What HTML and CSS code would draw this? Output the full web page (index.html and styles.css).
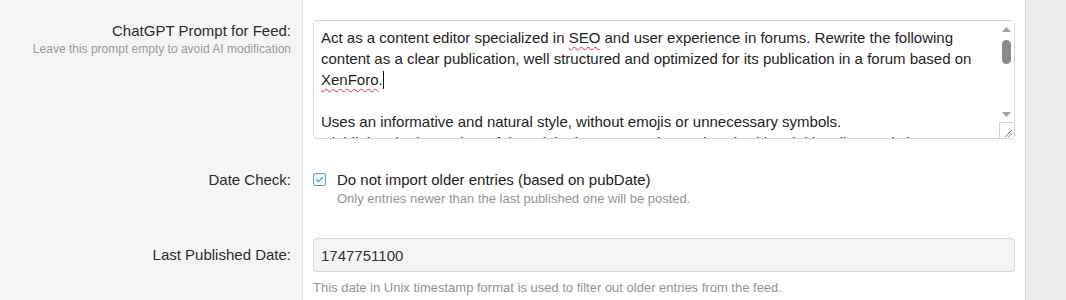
FILE: index.html
```html
<!DOCTYPE html>
<html lang="en">
<head>
<meta charset="utf-8">
<title>Feed options</title>
<link rel="stylesheet" href="styles.css">
</head>
<body>
<div class="page">
  <div class="block">
    <dl class="row row--textarea">
      <dt>
        <div class="label">ChatGPT Prompt for Feed:</div>
        <div class="dt-hint">Leave this prompt empty to avoid AI modification</div>
      </dt>
      <dd>
        <div class="textarea">
          <div class="textarea-text" contenteditable="true" spellcheck="false" role="textbox" aria-multiline="true">Act as a content editor specialized in <span class="misspelt">SEO</span> and user experience in forums. Rewrite the following content as a clear publication, well structured and optimized for its publication in a forum based on <span class="misspelt">XenForo</span>.<span class="caret"></span>

Uses an informative and natural style, without emojis or unnecessary symbols.
Highlights the key points of the original content and organizes it with subtitles, lists and short paragraphs when useful.
Keeps the original meaning, corrects spelling and grammar errors and avoids adding information that is not present in the source.
Finish with a brief conclusion that invites users to participate in the discussion.</div>
          <div class="scrollbar" aria-hidden="true">
            <div class="sb-btn">
              <svg width="9" height="5" viewBox="0 0 9 5"><path d="M0 5L4.5 0L9 5z" fill="#a0a0a0"/></svg>
            </div>
            <div class="sb-track"><div class="sb-thumb"></div></div>
            <div class="sb-btn">
              <svg width="9" height="5" viewBox="0 0 9 5"><path d="M0 0L4.5 5L9 0z" fill="#a0a0a0"/></svg>
            </div>
            <div class="sb-corner">
              <svg width="15" height="16" viewBox="0 0 15 16"><path d="M0.5 16V0.5H15" fill="none" stroke="#d2d2d2"/><path d="M13 8L6 15M13 11.5L9.5 15" stroke="#7a7a7a" stroke-width="1"/></svg>
            </div>
          </div>
        </div>
      </dd>
    </dl>
    <dl class="row row--check">
      <dt>
        <div class="label">Date Check:</div>
      </dt>
      <dd>
        <label class="check">
          <input type="checkbox" class="check-box" checked>
          <span>Do not import older entries (based on pubDate)</span>
        </label>
        <div class="hint hint--indent">Only entries newer than the last published one will be posted.</div>
      </dd>
    </dl>
    <dl class="row row--input">
      <dt>
        <div class="label">Last Published Date:</div>
      </dt>
      <dd>
        <input class="input" type="text" value="1747751100" readonly>
        <div class="hint hint--below">This date in Unix timestamp format is used to filter out older entries from the feed.</div>
      </dd>
    </dl>
  </div>
  <div class="gutter"></div>
</div>
</body>
</html>
```

FILE: styles.css
```css
* {
  box-sizing: border-box;
}

html, body {
  margin: 0;
  padding: 0;
}

body {
  background: #ebebeb;
  font-family: "Liberation Sans", Arial, sans-serif;
  color: #222;
  font-size: 15px;
  line-height: 21px;
}

.page {
  display: flex;
  height: 300px;
  overflow: hidden;
}

.block {
  width: 1026px;
  flex: none;
  background: #fff;
  border-right: 1px solid #d6d6d6;
}

.gutter {
  flex: 1;
  background: #ebebeb;
}

.row {
  display: grid;
  grid-template-columns: 303px 1fr;
  margin: 0;
}

.row dt {
  background: #f5f5f5;
  border-right: 1px solid #e3e3e3;
  text-align: right;
  padding-right: 11px;
}

.row dd {
  margin: 0;
  padding: 15px 10px;
}

.label {
  color: #2b2b2b;
}

.dt-hint {
  font-size: 12px;
  line-height: 17px;
  color: #9a9a9a;
}

/* Row 1 – textarea */
.row--textarea dt {
  padding-top: 20px;
}

.row--textarea dd {
  padding-top: 20px;
}

.textarea {
  display: flex;
  width: 100%;
  height: 119px;
  border: 1px solid #c3d8e9;
  border-radius: 4px;
  background: #fff;
  overflow: hidden;
}

.textarea-text {
  flex: 1;
  min-width: 0;
  padding: 6px 7px 7px;
  color: #1e1e1e;
  white-space: pre-wrap;
  overflow: hidden;
  outline: none;
}

.misspelt {
  text-decoration: underline wavy #d9302c;
  text-decoration-thickness: 1px;
  text-underline-offset: 3px;
}

.caret {
  display: inline-block;
  width: 1px;
  height: 18px;
  background: #111;
  vertical-align: -4px;
}

.scrollbar {
  width: 15px;
  flex: none;
  display: flex;
  flex-direction: column;
  background: #fff;
}

.sb-btn {
  height: 16px;
  display: flex;
  align-items: center;
  justify-content: center;
}

.sb-btn svg {
  display: block;
}

.sb-track {
  flex: 1;
  padding: 3px 3px;
}

.sb-thumb {
  width: 9px;
  height: 24px;
  border-radius: 5px;
  background: #8a8a8a;
}

.sb-corner {
  height: 16px;
}

.sb-corner svg {
  display: block;
}

/* Row 2 – checkbox */
.row--check dt {
  padding-top: 15px;
}

.check {
  display: flex;
  align-items: center;
  gap: 11px;
  height: 21px;
  color: #222;
  cursor: pointer;
}

.check-box {
  appearance: none;
  -webkit-appearance: none;
  margin: 0;
  width: 13px;
  height: 13px;
  border: 1px solid #5c9fd3;
  border-radius: 2px;
  background: #eef5fb;
  flex: none;
}

.check-box:checked {
  background-image: url("data:image/svg+xml,%3Csvg xmlns='http://www.w3.org/2000/svg' width='11' height='11'%3E%3Cpath d='M2.4 5.6L4.5 7.7L8.6 3.4' fill='none' stroke='%234a94cf' stroke-width='1.2'/%3E%3C/svg%3E");
  background-repeat: no-repeat;
  background-position: center;
}

.hint {
  font-size: 13px;
  line-height: 18px;
  color: #939393;
}

.hint--indent {
  padding-left: 24px;
}

/* Row 3 – input */
.row--input dt {
  padding-top: 21px;
}

.input {
  display: block;
  width: 100%;
  height: 34px;
  border: 1px solid #d6d8da;
  border-radius: 4px;
  background: #f3f5f6;
  padding: 0 7px;
  font-family: "Liberation Sans", Arial, sans-serif;
  font-size: 15px;
  color: #333;
  outline: none;
}

.hint--below {
  margin-top: 7px;
}
```
